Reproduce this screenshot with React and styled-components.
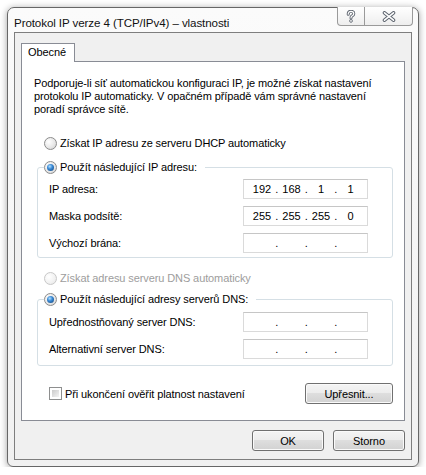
import React from 'react';
import styled, { createGlobalStyle } from 'styled-components';

const GlobalStyle = createGlobalStyle`
  body {
    margin: 0;
    background: #ffffff;
    font-family: "Liberation Sans", Arial, sans-serif;
    font-size: 11px;
    letter-spacing: -0.1px;
    color: #000000;
  }
`;

const Page = styled.div`
  padding: 7px 0 0 7px;
`;

const Window = styled.div`
  width: 412px;
  height: 460px;
  box-sizing: border-box;
  border: 1px solid #676767;
  border-radius: 7px 7px 6px 6px;
  background: linear-gradient(#fbfbfb, #f1f1f1);
  box-shadow: 0 1px 7px rgba(0, 0, 0, 0.38);
  display: flex;
  flex-direction: column;
`;

const TitleBar = styled.div`
  height: 25px;
  display: flex;
  align-items: flex-start;
  justify-content: space-between;
  padding: 0 5px 0 6px;
`;

const Title = styled.div`
  font-size: 11.6px;
  line-height: 14px;
  padding-top: 8px;
  color: #111111;
`;

const CaptionGroup = styled.div`
  display: flex;
  margin-top: -1px;
`;

const CaptionButton = styled.div`
  width: ${p => p.$w}px;
  height: 19px;
  box-sizing: border-box;
  border: 1px solid #9a9a9a;
  border-top: none;
  border-left-width: ${p => (p.$first ? 1 : 0)}px;
  border-radius: ${p => (p.$first ? '0 0 0 4px' : '0 0 4px 0')};
  background: linear-gradient(#ffffff, #eeeeee);
  display: flex;
  align-items: center;
  justify-content: center;
`;

const Client = styled.div`
  flex: 1;
  margin: 0 6px 6px 6px;
  border: 1px solid #7e7e7e;
  background: #f0f0f0;
  padding: 10px 8px 8px 6px;
  display: flex;
  flex-direction: column;
`;

const TabStrip = styled.div`
  display: flex;
  position: relative;
  z-index: 1;
`;

const Tab = styled.div`
  width: 54px;
  height: 19px;
  box-sizing: border-box;
  border: 1px solid #898c95;
  border-bottom: none;
  background: #ffffff;
  padding-left: 6px;
  line-height: 17px;
  margin-bottom: -1px;
`;

const TabPanel = styled.div`
  width: 384px;
  height: 360px;
  box-sizing: border-box;
  border: 1px solid #898c95;
  background: #ffffff;
  padding: 15px 11px 0 12px;
  display: flex;
  flex-direction: column;
`;

const Description = styled.p`
  margin: 0 0 19px 0;
  line-height: 13px;
`;

const RadioRow = styled.label`
  display: flex;
  align-items: center;
  height: 16px;
  gap: 3px;
  margin-left: ${p => p.$indent}px;
  margin-top: ${p => p.$top || 0}px;
  color: ${p => (p.$disabled ? '#9d9d9d' : '#000000')};
`;

const RadioCircle = styled.span`
  width: 13px;
  height: 13px;
  box-sizing: border-box;
  border-radius: 50%;
  border: 1px solid ${p => (p.$disabled ? '#c8c8c8' : '#8b8b8b')};
  background: ${p =>
    p.$disabled
      ? 'radial-gradient(circle at 35% 35%, #ffffff 0, #f1f1f1 60%, #e4e4e4 100%)'
      : 'radial-gradient(circle at 35% 35%, #ffffff 0, #e8e8e8 55%, #cdcdcd 100%)'};
  display: flex;
  align-items: center;
  justify-content: center;

  &::after {
    content: '';
    display: ${p => (p.$checked ? 'block' : 'none')};
    width: 7px;
    height: 7px;
    border-radius: 50%;
    background: radial-gradient(circle at 40% 35%, #b6e2ff 0, #3a8ad6 40%, #0f3e73 100%);
  }
`;

const Group = styled.fieldset`
  margin: ${p => p.$top}px 0 0 3px;
  padding: 0 24px ${p => p.$bottom}px 6px;
  border: 1px solid #d5dfe5;
  border-radius: 3px;
  display: flex;
  flex-direction: column;
  gap: 7px;
`;

const Legend = styled.legend`
  padding: 0 8px 0 0;
  margin-bottom: ${p => p.$gap}px;
`;

const FieldRow = styled.div`
  display: flex;
  align-items: center;
  justify-content: space-between;
  height: 20px;
  padding-left: 5px;
`;

const IpBox = styled.div`
  width: 125px;
  height: 20px;
  box-sizing: border-box;
  border: 1px solid #dadada;
  border-top-color: #c6c6c6;
  background: #ffffff;
  display: flex;
  align-items: center;
  padding-left: 6px;
  letter-spacing: 0;
`;

const Octet = styled.span`
  width: 24px;
  text-align: center;
`;

const Dot = styled.span`
  width: 5.5px;
  text-align: center;
`;

const BottomRow = styled.div`
  display: flex;
  align-items: center;
  justify-content: space-between;
  margin-top: 17px;
  padding-left: 15px;
`;

const CheckLabel = styled.label`
  display: flex;
  align-items: center;
  gap: 3px;
`;

const CheckBox = styled.span`
  width: 13px;
  height: 13px;
  box-sizing: border-box;
  border: 1px solid #8e8f8f;
  background: #ffffff;
  padding: 2px;
  display: flex;

  &::after {
    content: '';
    flex: 1;
    background: linear-gradient(135deg, #cbcbcb, #f4f4f4);
  }
`;

const Button = styled.button`
  width: ${p => p.$w}px;
  height: 21px;
  box-sizing: border-box;
  border: 1px solid #707070;
  border-radius: 3px;
  background: linear-gradient(#f4f4f4 0%, #ececec 50%, #dedede 50%, #d2d2d2 100%);
  box-shadow: inset 0 0 0 1px #fafafa;
  font-family: inherit;
  font-size: 11px;
  letter-spacing: -0.1px;
  color: #000000;
  padding: 0;
`;

const ButtonRow = styled.div`
  display: flex;
  justify-content: flex-end;
  gap: 9px;
  margin-top: 9px;
  width: 384px;
`;

const HelpGlyph = () => (
  <svg width="10" height="13" viewBox="0 0 10 13">
    <path
      d="M2.2 4.2C2.2 2 3.6 1.3 5 1.3C6.7 1.3 7.8 2.3 7.8 3.7C7.8 5.1 6.6 5.6 5.8 6.1C5.1 6.5 5 7 5 7.9"
      fill="none"
      stroke="#5f6670"
      strokeWidth="3"
      strokeLinecap="round"
    />
    <path
      d="M2.2 4.2C2.2 2 3.6 1.3 5 1.3C6.7 1.3 7.8 2.3 7.8 3.7C7.8 5.1 6.6 5.6 5.8 6.1C5.1 6.5 5 7 5 7.9"
      fill="none"
      stroke="#ffffff"
      strokeWidth="1.2"
      strokeLinecap="round"
    />
    <circle cx="5" cy="10.9" r="1.4" fill="#ffffff" stroke="#5f6670" strokeWidth="0.9" />
  </svg>
);

const CloseGlyph = () => (
  <svg width="14" height="11" viewBox="0 0 14 11">
    <path d="M2.5 1.8L11.5 9.2M11.5 1.8L2.5 9.2" stroke="#5f6670" strokeWidth="3.6" strokeLinecap="round" />
    <path d="M2.5 1.8L11.5 9.2M11.5 1.8L2.5 9.2" stroke="#ffffff" strokeWidth="1.6" strokeLinecap="round" />
  </svg>
);

const Radio = ({ checked, disabled, children, indent = 0, top }) => (
  <RadioRow $indent={indent} $top={top} $disabled={disabled}>
    <RadioCircle $checked={checked} $disabled={disabled} />
    {children}
  </RadioRow>
);

const IpField = ({ octets = ['', '', '', ''] }) => (
  <IpBox>
    {octets.map((o, i) => (
      <React.Fragment key={i}>
        {i > 0 && <Dot>.</Dot>}
        <Octet>{o}</Octet>
      </React.Fragment>
    ))}
  </IpBox>
);

export default function App() {
  return (
    <Page>
      <GlobalStyle />
      <Window>
        <TitleBar>
          <Title>Protokol IP verze 4 (TCP/IPv4) – vlastnosti</Title>
          <CaptionGroup>
            <CaptionButton $w={28} $first>
              <HelpGlyph />
            </CaptionButton>
            <CaptionButton $w={48}>
              <CloseGlyph />
            </CaptionButton>
          </CaptionGroup>
        </TitleBar>
        <Client>
          <TabStrip>
            <Tab>Obecné</Tab>
          </TabStrip>
          <TabPanel>
            <Description>
              Podporuje-li síť automatickou konfiguraci IP, je možné získat nastavení
              <br />
              protokolu IP automaticky. V opačném případě vám správné nastavení
              <br />
              poradí správce sítě.
            </Description>
            <Radio indent={10}>Získat IP adresu ze serveru DHCP automaticky</Radio>
            <Group $top={8} $bottom={4}>
              <Legend $gap={4}>
                <Radio checked>Použít následující IP adresu:</Radio>
              </Legend>
              <FieldRow>
                IP adresa:
                <IpField octets={['192', '168', '1', '1']} />
              </FieldRow>
              <FieldRow>
                Maska podsítě:
                <IpField octets={['255', '255', '255', '0']} />
              </FieldRow>
              <FieldRow>
                Výchozí brána:
                <IpField />
              </FieldRow>
            </Group>
            <Radio indent={10} top={12} disabled>
              Získat adresu serveru DNS automaticky
            </Radio>
            <Group $top={5} $bottom={6}>
              <Legend $gap={5}>
                <Radio checked>Použít následující adresy serverů DNS:</Radio>
              </Legend>
              <FieldRow>
                Upřednostňovaný server DNS:
                <IpField />
              </FieldRow>
              <FieldRow>
                Alternativní server DNS:
                <IpField />
              </FieldRow>
            </Group>
            <BottomRow>
              <CheckLabel>
                <CheckBox />
                Při ukončení ověřit platnost nastavení
              </CheckLabel>
              <Button $w={88}>Upřesnit...</Button>
            </BottomRow>
          </TabPanel>
          <ButtonRow>
            <Button $w={72}>OK</Button>
            <Button $w={72}>Storno</Button>
          </ButtonRow>
        </Client>
      </Window>
    </Page>
  );
}
